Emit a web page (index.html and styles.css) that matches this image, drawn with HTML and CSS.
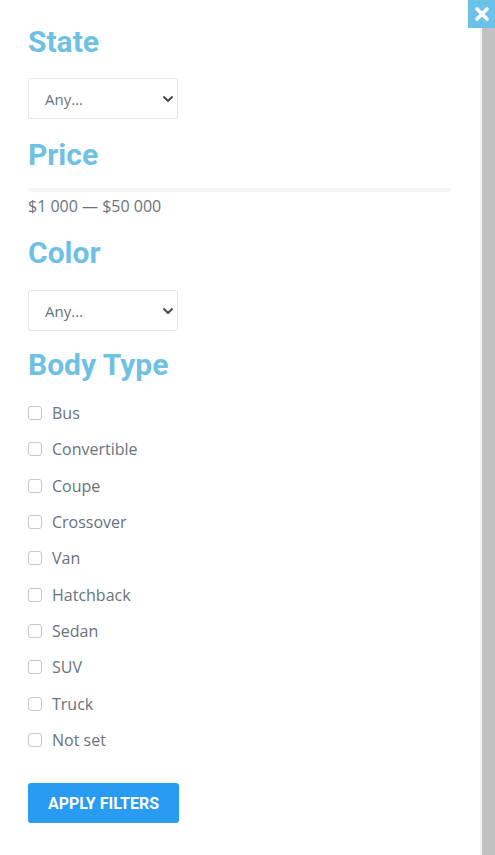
FILE: index.html
```html
<!DOCTYPE html>
<html>
<head>
<meta charset="utf-8">
<link rel="stylesheet" href="styles.css">
</head>
<body>
<div class="layout">
  <div class="panel">
    <h2 class="title">State</h2>
    <div class="select"><span>Any...</span><svg class="chev" viewBox="0 0 10 6" width="10" height="6"><path d="M1 1l4 4 4-4" fill="none" stroke="#444" stroke-width="1.8" stroke-linecap="round" stroke-linejoin="round"/></svg></div>
    <h2 class="title t-price">Price</h2>
    <div class="track"></div>
    <div class="range">$1 000 — $50 000</div>
    <h2 class="title t-color">Color</h2>
    <div class="select select-2"><span>Any...</span><svg class="chev" viewBox="0 0 10 6" width="10" height="6"><path d="M1 1l4 4 4-4" fill="none" stroke="#444" stroke-width="1.8" stroke-linecap="round" stroke-linejoin="round"/></svg></div>
    <h2 class="title t-body">Body Type</h2>
    <ul class="checks">
      <li><span class="box"></span>Bus</li>
      <li><span class="box"></span>Convertible</li>
      <li><span class="box"></span>Coupe</li>
      <li><span class="box"></span>Crossover</li>
      <li><span class="box"></span>Van</li>
      <li><span class="box"></span>Hatchback</li>
      <li><span class="box"></span>Sedan</li>
      <li><span class="box"></span>SUV</li>
      <li><span class="box"></span>Truck</li>
      <li><span class="box"></span>Not set</li>
    </ul>
    <button class="apply">APPLY FILTERS</button>
  </div>
  <div class="edge"></div>
  <div class="scrollbar"></div>
</div>
<div class="close"><svg viewBox="0 0 16 16" width="16" height="16"><path d="M3 3l10 10M13 3L3 13" stroke="#fff" stroke-width="3.6" stroke-linecap="round"/></svg></div>
</body>
</html>
```
FILE: styles.css
```css
html, body { margin: 0; padding: 0; background: #fff; }
body { width: 495px; height: 855px; overflow: hidden; position: relative; font-family: "Open Sans", sans-serif; }
.layout { display: flex; height: 855px; }
.panel { width: 423px; padding: 24px 0 0 28px; }
.edge { width: 29px; border-right: 2px solid #f1f1f1; }
.scrollbar { width: 13px; margin-top: 28px; background: #c1c1c1; }
.title { margin: 0; font-family: Roboto, sans-serif; font-weight: 700; font-size: 30px; line-height: 36px; color: #6ec1e4; }
.select { box-sizing: border-box; width: 150px; height: 41px; margin-top: 18px; border: 1px solid #e3e3e3; border-radius: 3px; display: flex; align-items: center; justify-content: space-between; padding: 0 4px 0 16px; font-size: 15px; color: #69727d; }
.chev { margin-top: 1px; }
.select-2 { margin-top: 19px; }
.t-price { margin-top: 18px; }
.track { margin-top: 15px; height: 4px; border-radius: 2px; background: #f5f5f5; }
.range { margin-top: 2px; font-size: 16px; line-height: 24px; color: #69727d; }
.t-color { margin-top: 17px; }
.t-body { margin-top: 16px; }
.checks { list-style: none; margin: 12px 0 0; padding: 0; }
.checks li { height: 36.33px; display: flex; align-items: center; font-size: 16px; color: #69727d; }
.box { box-sizing: border-box; width: 14px; height: 14px; border: 1px solid #c8c8c8; border-radius: 3px; margin-right: 10px; }
.apply { margin-top: 25px; width: 151px; height: 40px; border: none; border-radius: 3px; background: #279cf2; color: #fff; font-family: Roboto, sans-serif; font-weight: 700; font-size: 16px; padding: 0; }
.close { position: absolute; top: 0; right: 0; width: 27px; height: 28px; background: #6cc1e6; display: flex; align-items: center; justify-content: center; }
```
